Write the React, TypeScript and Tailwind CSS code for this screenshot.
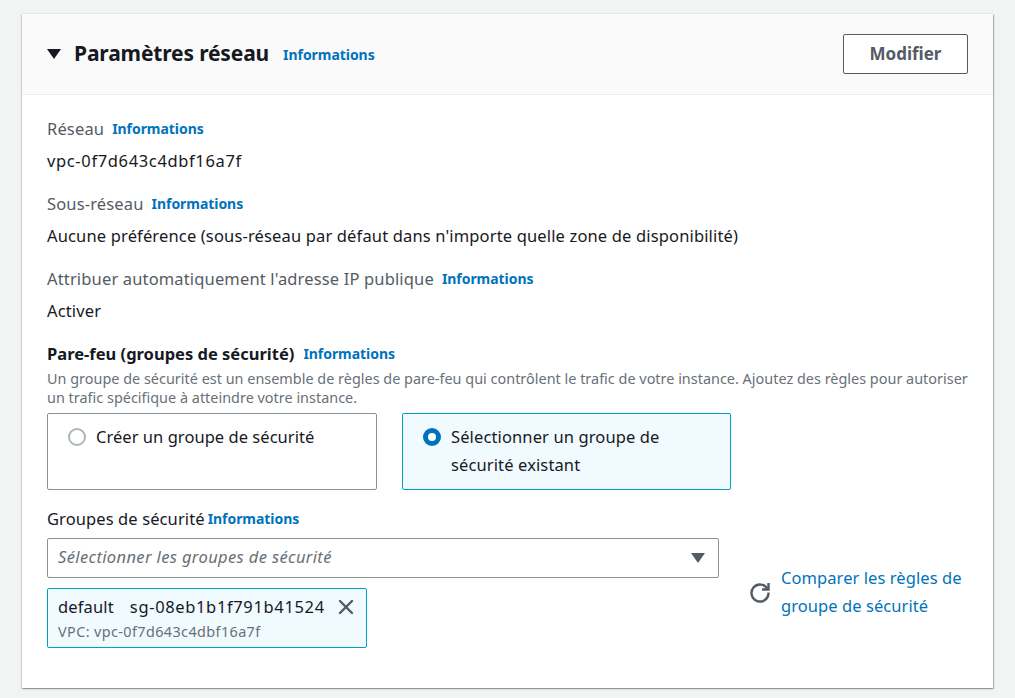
import { X } from 'lucide-react';

function Info({ className = '' }: { className?: string }) {
  return <a className={`text-[14px] font-bold tracking-[-0.05px] text-[#0073bb] ${className}`}>Informations</a>;
}

function Field({ label, value, mono }: { label: string; value: string; mono?: boolean }) {
  return (
    <div className="h-[75px]">
      <div className="flex h-[33px] items-center text-[#545b64]">
        <span>{label}</span>
        <Info className="ml-[8px] mt-[1px]" />
      </div>
      <div className={`flex h-[31px] items-center text-[#16191f] ${mono ? 'tracking-[0.64px]' : ''}`}>{value}</div>
    </div>
  );
}

export default function App() {
  return (
    <div className="min-h-[698px] bg-[#f2f3f3] px-[22px] pt-[14px] text-[16.5px] leading-[28px] tracking-[0.15px] text-[#16191f] [font-family:'Noto_Sans',sans-serif]">
      <div className="h-[674px] w-[971px] bg-white shadow-[1px_1px_1px_0_rgba(0,28,36,0.3),-1px_1px_1px_0_rgba(0,28,36,0.15),0_-1px_1px_0_rgba(0,28,36,0.05)]">
        {/* Header */}
        <div className="flex h-[81px] items-center justify-between border-b border-[#eaeded] bg-[#fafafa] px-[25px]">
          <div className="flex items-center">
            <svg width="14" height="10" viewBox="0 0 14 10" className="mr-[13px]">
              <path d="M0 0 H14 L7 10 Z" fill="#16191f" />
            </svg>
            <h2 className="mb-[2px] text-[21px] font-bold tracking-[-0.15px] text-[#16191f]">Paramètres réseau</h2>
            <Info className="ml-[14px] mt-[2px]" />
          </div>
          <button className="h-[40px] w-[125px] rounded-[2px] border border-[#545b64] bg-white text-[17px] font-bold tracking-normal text-[#545b64]">
            Modifier
          </button>
        </div>

        {/* Body */}
        <div className="px-[25px] pt-[17px]">
          <Field label="Réseau" value="vpc-0f7d643c4dbf16a7f" mono />
          <Field
            label="Sous-réseau"
            value="Aucune préférence (sous-réseau par défaut dans n'importe quelle zone de disponibilité)"
          />
          <Field label="Attribuer automatiquement l'adresse IP publique" value="Activer" />

          <div className="mt-[3px] flex h-[28px] items-center">
            <span className="font-bold tracking-normal">Pare-feu (groupes de sécurité)</span>
            <Info className="ml-[9px]" />
          </div>
          <p className="mt-[1px] w-[925px] text-[14.4px] leading-[19px] tracking-[0.02px] text-[#687078]">
            Un groupe de sécurité est un ensemble de règles de pare-feu qui contrôlent le trafic de votre instance.
            Ajoutez des règles pour autoriser un trafic spécifique à atteindre votre instance.
          </p>

          {/* Tiles */}
          <div className="mt-[6px] flex gap-[25px]">
            <div className="flex h-[77px] w-[330px] items-start rounded-[2px] border border-[#879596] pl-[20px] pt-[9px]">
              <span className="mt-[5px] h-[18px] w-[18px] shrink-0 rounded-full border-2 border-[#aab7b8] bg-white" />
              <span className="ml-[10px] tracking-[0.04px]">Créer un groupe de sécurité</span>
            </div>
            <div className="flex h-[77px] w-[329px] items-start rounded-[2px] border border-[#00a1c9] bg-[#f1faff] pl-[20px] pt-[9px]">
              <span className="mt-[5px] flex h-[18px] w-[18px] shrink-0 items-center justify-center rounded-full bg-[#0073bb]">
                <span className="h-[8px] w-[8px] rounded-full bg-white" />
              </span>
              <span className="ml-[10px] w-[250px] tracking-[0.12px]">Sélectionner un groupe de sécurité existant</span>
            </div>
          </div>

          {/* Security groups */}
          <div className="mt-[13px] flex h-[31px] items-center">
            <span className="tracking-[0.1px]">Groupes de sécurité</span>
            <Info className="ml-[3px] mt-[1px]" />
          </div>
          <div className="mt-[4px] flex gap-[30px]">
            <div className="w-[672px] shrink-0">
              <div className="flex h-[40px] items-center justify-between rounded-[2px] border border-[#879596] bg-white pl-[10px] pr-[13px]">
                <span className="mb-[2px] italic tracking-[0.37px] text-[#687078]">Sélectionner les groupes de sécurité</span>
                <svg width="14" height="10" viewBox="0 0 14 10">
                  <path d="M0 0 H14 L7 10 Z" fill="#545b64" />
                </svg>
              </div>
              <div className="mt-[10px] h-[60px] w-[320px] rounded-[2px] border border-[#00a1c9] bg-[#f1faff] pl-[10px] pt-[3px]">
                <div className="flex h-[30px] items-center">
                  <span className="mb-[1px]">default</span>
                  <span className="mb-[1px] ml-[16px] tracking-[0.64px]">sg-08eb1b1f791b41524</span>
                  <X size={24} strokeWidth={2.4} className="ml-[9px] text-[#545b64]" />
                </div>
                <div className="text-[14.4px] leading-[20px] tracking-[0.4px] text-[#687078]">VPC: vpc-0f7d643c4dbf16a7f</div>
              </div>
            </div>
            <div className="flex items-center self-start pt-[26px]">
              <svg width="22" height="22" viewBox="0 0 22 22" fill="none" stroke="#545b64" strokeWidth="2.4" className="mr-[10px]">
                <path d="M18.5 8 A8.5 8.5 0 1 0 19.5 11.5" />
                <path d="M19.5 2 V8.5 H13" />
              </svg>
              <a className="w-[200px] tracking-[0.07px] text-[#0073bb]">Comparer les règles de groupe de sécurité</a>
            </div>
          </div>
        </div>
      </div>
    </div>
  );
}
